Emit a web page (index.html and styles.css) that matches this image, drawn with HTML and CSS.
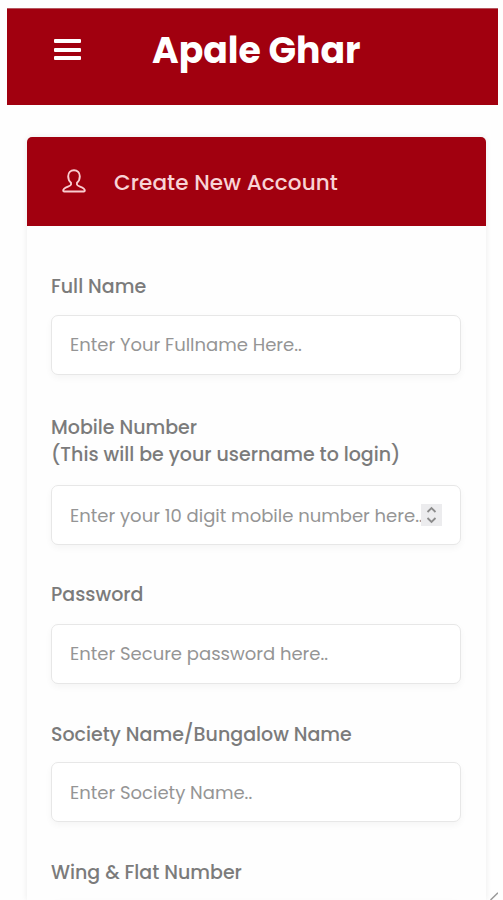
FILE: index.html
```
<!DOCTYPE html>
<html lang="en">
<head>
  <meta charset="UTF-8">
  <meta name="viewport" content="width=device-width, initial-scale=1.0">
  <title>Apale Ghar</title>
  <link rel="stylesheet" href="styles.css">
</head>
<body>

  <header class="navbar">
    <button class="menu-button" aria-label="Menu">
      <span></span>
      <span></span>
      <span></span>
    </button>
    <h1>Apale Ghar</h1>
  </header>

  <main class="card">
    <div class="card-header">
      <svg class="user-icon" viewBox="0 0 24 24">
        <path d="M12 1.2C8.6 1.2 6.200 3.700 6.200 7.200C6.200 10 7.200 12.300 9 13.700V15.700C8.700 17.500 1.200 18 1.200 21.500Q1.200 22.500 2.200 22.500H21.800Q22.800 22.500 22.800 21.500C22.800 18 15.300 17.500 15 15.700V13.700C16.800 12.300 17.800 10 17.800 7.200C17.800 3.700 15.400 1.200 12 1.200Z"/>
      </svg>
      <h2>Create New Account</h2>
    </div>

    <form class="card-body">
      <div class="form-group group-name">
        <label for="fullname">Full Name</label>
        <input type="text" id="fullname" placeholder="Enter Your Fullname Here..">
      </div>

      <div class="form-group group-mobile">
        <label for="mobile">Mobile Number<br>(This will be your username to login)</label>
        <div class="input-wrap">
          <input type="text" id="mobile" placeholder="Enter your 10 digit mobile number here..">
          <span class="spinner">
            <svg viewBox="0 0 21 22">
              <path d="M6.500 8L10.500 4L14.500 8M6.500 14L10.500 18L14.500 14"/>
            </svg>
          </span>
        </div>
      </div>

      <div class="form-group group-password">
        <label for="password">Password</label>
        <input type="password" id="password" placeholder="Enter Secure password here..">
      </div>

      <div class="form-group group-society">
        <label for="society">Society Name/Bungalow Name</label>
        <input type="text" id="society" placeholder="Enter Society Name..">
      </div>

      <div class="form-group">
        <label for="flat">Wing &amp; Flat Number</label>
        <input type="text" id="flat">
      </div>
    </form>
  </main>

  <svg class="resize-grip" viewBox="0 0 8 8">
    <path d="M0.500 8L8 0.800"/>
  </svg>

</body>
</html>
```
FILE: styles.css
```
* {
  box-sizing: border-box;
}

body {
  font-family: Poppins, Inter, sans-serif;
  background-color: #fefefe;
  margin: 0;
  padding: 8px 5px 0 7px;
  height: 900px;
  overflow: hidden;
}

.navbar {
  display: flex;
  align-items: flex-start;
  height: 97px;
  background-color: #a1000f;
  border-top: 1px solid #b5565f;
}

.menu-button {
  display: flex;
  flex-direction: column;
  gap: 4px;
  width: 27px;
  margin: 30px 0 0 47px;
  padding: 0;
  background: none;
  border: none;
}

.menu-button span {
  height: 4px;
  margin-bottom: 0.500px;
  border-radius: 1px;
  background-color: #fff;
}

h1 {
  margin: 21px 0 0 71px;
  font-size: 36.200px;
  line-height: 42px;
  font-weight: 700;
  color: #fff;
  white-space: nowrap;
}

.card {
  width: 459px;
  height: 763px;
  margin: 32px 0 0 20px;
  border-radius: 5px 5px 0 0;
  overflow: hidden;
  background-color: #fefefe;
  box-shadow: 0 0 6px rgba(0, 0, 0, 0.08);
}

.card-header {
  display: flex;
  align-items: center;
  height: 89px;
  padding-left: 35px;
  background-color: #a1000f;
}

.user-icon {
  width: 24px;
  height: 24px;
  margin-bottom: 2px;
  fill: none;
  stroke: #f9cdd0;
  stroke-width: 1.900;
  stroke-linejoin: round;
}

h2 {
  margin: 2px 0 0 28px;
  font-size: 21.500px;
  font-weight: 500;
  letter-spacing: 0.100px;
  color: #f8d3d6;
  white-space: nowrap;
}

.card-body {
  padding: 47px 25px 0 24px;
}

.form-group {
  margin-bottom: 37px;
}

.group-name {
  margin-bottom: 39px;
}

.group-mobile {
  margin-bottom: 36px;
}

label {
  display: block;
  margin-bottom: 14px;
  font-size: 19px;
  line-height: 27px;
  font-weight: 500;
  color: #7b7b7b;
  white-space: nowrap;
}

.group-name label {
  margin-bottom: 15px;
}

.group-mobile label {
  margin-bottom: 17px;
}

.group-password label {
  margin-bottom: 16px;
}

.input-wrap {
  position: relative;
}

input {
  display: block;
  width: 100%;
  height: 60px;
  padding: 0 18px 2px;
  border: 1.500px solid #e7e7e7;
  border-radius: 7px;
  background-color: #fff;
  box-shadow: 0 3px 7px rgba(0, 0, 0, 0.04);
  font-family: inherit;
  font-size: 18px;
  outline: none;
}

.input-wrap input,
.group-society input {
  padding-bottom: 0;
}

input::placeholder {
  color: #959595;
  opacity: 1;
}

.spinner {
  position: absolute;
  top: 19px;
  right: 19px;
  width: 21px;
  height: 22px;
  background-color: #ececee;
}

.spinner svg {
  display: block;
  fill: none;
  stroke: #8c8c8c;
  stroke-width: 1.800;
}

.resize-grip {
  position: absolute;
  left: 490px;
  top: 892px;
  width: 8px;
  height: 8px;
  fill: none;
  stroke: #999;
  stroke-width: 1.500;
}
```
